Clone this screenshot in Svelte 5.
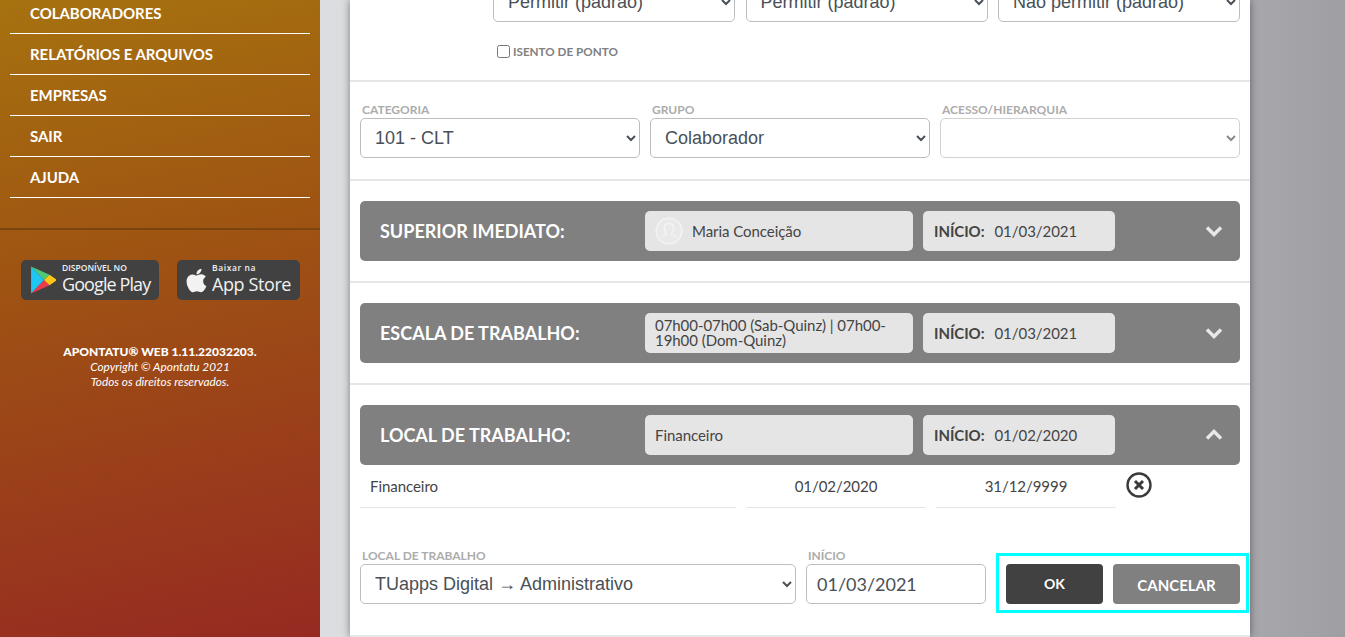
<script>
	const menu = ["COLABORADORES", "RELATÓRIOS E ARQUIVOS", "EMPRESAS", "SAIR", "AJUDA"];
</script>

<div class="page">
	<aside class="sidebar">
		<nav>
			{#each menu as item}
				<a href="#top">{item}</a>
			{/each}
		</nav>
		<div class="stores">
			<div class="badge google">
				<svg class="play" viewBox="0 0 24 27" width="26" height="30">
					<polygon points="1,1 13,13.5 1,26" fill="#1fc5f3" />
					<polygon points="1,1 13,13.5 18,8.7" fill="#4fc87a" />
					<polygon points="1,26 13,13.5 18,18.3" fill="#ee3b4c" />
					<polygon points="18,8.7 13,13.5 18,18.3 25,13.5" fill="#fdc514" />
				</svg>
				<div class="badge-text">
					<small>DISPONÍVEL NO</small>
					<strong>Google Play</strong>
				</div>
			</div>
			<div class="badge apple">
				<svg viewBox="0 0 384 512" width="21" height="27">
					<path fill="#f2f2f2" d="M318.7 268.7c-.2-36.7 16.4-64.4 50-84.8-18.8-26.9-47.2-41.7-84.7-44.6-35.5-2.8-74.3 20.7-88.5 20.7-15 0-49.4-19.7-76.4-19.7C63.3 141.2 4 184.8 4 273.5q0 39.3 14.4 81.2c12.8 36.7 59 126.7 107.2 125.2 25.2-.6 43-17.9 75.8-17.9 31.8 0 48.3 17.9 76.4 17.9 48.6-.7 90.4-82.5 102.6-119.3-65.2-30.7-61.7-90-61.7-91.9zm-56.6-164.2c27.3-32.4 24.8-61.9 24-72.5-24.1 1.4-52 16.4-67.9 34.9-17.5 19.8-27.8 44.3-25.6 71.9 26.1 2 49.9-11.4 69.5-34.3z" />
				</svg>
				<div class="badge-text">
					<small>Baixar na</small>
					<strong>App Store</strong>
				</div>
			</div>
		</div>
		<footer>
			<b>APONTATU® WEB 1.11.22032203.</b>
			<i>Copyright © Apontatu 2021</i>
			<i>Todos os direitos reservados.</i>
		</footer>
	</aside>

	<main class="panel">
		<section class="top">
			<div class="three">
				<select><option>Permitir (padrão)</option></select>
				<select><option>Permitir (padrão)</option></select>
				<select><option>Não permitir (padrão)</option></select>
			</div>
			<label class="check"><input type="checkbox" /> ISENTO DE PONTO</label>
		</section>

		<section class="selects">
			<div class="field">
				<span class="lbl">CATEGORIA</span>
				<select><option>101 - CLT</option></select>
			</div>
			<div class="field">
				<span class="lbl">GRUPO</span>
				<select><option>Colaborador</option></select>
			</div>
			<div class="field wide">
				<span class="lbl">ACESSO/HIERARQUIA</span>
				<select disabled><option></option></select>
			</div>
		</section>

		<section>
			<div class="bar">
				<h3>SUPERIOR IMEDIATO:</h3>
				<div class="pill name">
					<svg class="avatar" viewBox="0 0 28 28" width="28" height="28">
						<circle cx="14" cy="14" r="12.8" fill="#e9e9e9" stroke="#f3f3f3" stroke-width="1.6" />
						<path d="M14 6.5c-3 0-4.6 2.2-4.6 5 0 2 .8 3.6 1.9 4.7v1.2c-2 .9-4.4 1.6-5 3.4M14 6.5c3 0 4.6 2.2 4.6 5 0 2-.8 3.6-1.9 4.7v1.2c2 .9 4.4 1.6 5 3.4" fill="none" stroke="#f4f4f4" stroke-width="1.5" />
					</svg>
					Maria Conceição
				</div>
				<div class="pill date"><b>INÍCIO:</b> 01/03/2021</div>
				<svg class="chev" viewBox="0 0 18 12" width="18" height="12">
					<path d="M2 2.5l7 7 7-7" fill="none" stroke="#e8e8e8" stroke-width="3.4" />
				</svg>
			</div>
		</section>

		<section>
			<div class="bar">
				<h3>ESCALA DE TRABALHO:</h3>
				<div class="pill two-lines">07h00-07h00 (Sab-Quinz) | 07h00-19h00 (Dom-Quinz)</div>
				<div class="pill date"><b>INÍCIO:</b> 01/03/2021</div>
				<svg class="chev" viewBox="0 0 18 12" width="18" height="12">
					<path d="M2 2.5l7 7 7-7" fill="none" stroke="#e8e8e8" stroke-width="3.4" />
				</svg>
			</div>
		</section>

		<section class="open">
			<div class="bar">
				<h3>LOCAL DE TRABALHO:</h3>
				<div class="pill">Financeiro</div>
				<div class="pill date"><b>INÍCIO:</b> 01/02/2020</div>
				<svg class="chev" viewBox="0 0 18 12" width="18" height="12">
					<path d="M2 9.5l7-7 7 7" fill="none" stroke="#e8e8e8" stroke-width="3.4" />
				</svg>
			</div>
			<div class="detail">
				<span class="cell name-cell">Financeiro</span>
				<span class="cell">01/02/2020</span>
				<span class="cell">31/12/9999</span>
				<svg class="remove" viewBox="0 0 26 26" width="26" height="26">
					<circle cx="13" cy="13" r="11.5" fill="none" stroke="#3a3a3a" stroke-width="2.4" />
					<path d="M9 9l8 8M17 9l-8 8" stroke="#3a3a3a" stroke-width="3" />
				</svg>
			</div>
			<div class="form-row">
				<div class="field place">
					<span class="lbl">LOCAL DE TRABALHO</span>
					<select><option>TUapps Digital → Administrativo</option></select>
				</div>
				<div class="field start">
					<span class="lbl">INÍCIO</span>
					<input type="text" value="01/03/2021" />
				</div>
				<div class="actions">
					<button class="ok">OK</button>
					<button class="cancel">CANCELAR</button>
				</div>
			</div>
		</section>
	</main>
	<div class="backdrop"></div>
</div>

<style>
	:global(body) {
		margin: 0;
		overflow: hidden;
	}

	.page {
		display: flex;
		height: 637px;
		overflow: hidden;
		font-family: Lato, sans-serif;
		background: #dcdde0;
	}

	.sidebar {
		flex: 0 0 320px;
		height: 637px;
		background: linear-gradient(168deg, #a6720f 0%, #9f5512 38%, #962a22 100%);
		color: #fff;
	}

	nav {
		display: flex;
		flex-direction: column;
		margin-top: -7px;
		padding: 0 10px 30px;
		border-bottom: 2px solid #7a440f;
	}

	nav a {
		display: flex;
		align-items: center;
		height: 40px;
		padding-left: 20px;
		border-bottom: 1px solid #fff;
		color: #fff;
		font-size: 15px;
		font-weight: 700;
		text-decoration: none;
		letter-spacing: -0.05px;
	}

	.stores {
		display: flex;
		gap: 18px;
		padding: 30px 0 0 21px;
	}

	.badge {
		display: flex;
		align-items: center;
		box-sizing: border-box;
		height: 40px;
		border-radius: 5px;
		background: #414141;
		color: #f2f2f2;
	}

	.google {
		width: 138px;
		padding-left: 9px;
		gap: 6px;
	}

	.apple {
		width: 123px;
		padding-left: 9px;
		gap: 5px;
	}

	.badge-text {
		display: flex;
		flex-direction: column;
		gap: 1px;
		margin-top: -4px;
		font-family: "Open Sans", sans-serif;
	}

	.badge-text small {
		font-size: 8.5px;
		line-height: 10px;
		font-weight: 600;
	}

	.badge-text strong {
		font-size: 18px;
		line-height: 20px;
		font-weight: 500;
		letter-spacing: -0.9px;
		white-space: nowrap;
	}

	.apple .badge-text small {
		font-size: 8.5px;
		letter-spacing: 0.6px;
	}

	.apple .badge-text strong {
		letter-spacing: -0.4px;
	}

	footer {
		display: flex;
		flex-direction: column;
		align-items: center;
		margin-top: 44px;
		font-size: 11.8px;
		line-height: 15px;
	}

	footer b {
		font-size: 12px;
		font-weight: 900;
	}

	.panel {
		flex: 0 0 900px;
		margin-left: 30px;
		height: 637px;
		background: #fff;
		box-shadow: 0 0 8px rgba(0, 0, 0, 0.45);
		position: relative;
		z-index: 1;
	}

	.backdrop {
		flex: 1;
		background: linear-gradient(90deg, #a8a7ac, #9f9ea2);
	}

	section {
		box-sizing: border-box;
		padding: 20px 10px;
		border-bottom: 2px solid #e6e6e6;
	}

	select,
	input[type="text"] {
		box-sizing: border-box;
		width: 100%;
		height: 40px;
		padding: 6px 10px;
		border: 1px solid #bdbdbd;
		border-radius: 5px;
		background: #fff;
		color: #495057;
		font-family: "Liberation Sans", Arial, sans-serif;
		font-size: 18px;
	}

	input[type="text"] {
		font-family: Lato, sans-serif;
	}

	select:disabled {
		border-color: #d2d2d2;
		color: #8a8a8a;
		opacity: 1;
	}

	.top {
		margin-top: -18px;
		height: 100px;
		padding: 0 10px 0 143px;
	}

	.three {
		display: grid;
		grid-template-columns: repeat(3, 242px);
		column-gap: 10.5px;
	}

	.check {
		display: flex;
		align-items: center;
		gap: 3px;
		margin-top: 22px;
		padding-left: 4px;
		color: #808080;
		font-size: 11.7px;
		font-weight: 700;
	}

	.check input {
		width: 13px;
		height: 13px;
		margin: 0;
	}

	.selects {
		display: flex;
		gap: 10px;
		padding: 21px 10px 21px;
	}

	.field {
		display: flex;
		flex-direction: column;
		flex: 0 0 280px;
	}

	.field.wide {
		flex: 0 0 300px;
	}

	.lbl {
		height: 15px;
		padding-left: 2px;
		color: #acacac;
		font-size: 12px;
		line-height: 13px;
		font-weight: 700;
	}

	.bar {
		display: flex;
		align-items: center;
		box-sizing: border-box;
		height: 60px;
		padding-left: 20px;
		border-radius: 5px;
		background: #808080;
	}

	.bar h3 {
		flex: 0 0 265px;
		margin: 0;
		color: #fff;
		font-size: 18px;
		font-weight: 700;
	}

	.pill {
		display: flex;
		align-items: center;
		box-sizing: border-box;
		flex: 0 0 268px;
		height: 40px;
		margin-right: 10px;
		padding-left: 10px;
		border-radius: 5px;
		background: #e5e5e5;
		color: #444;
		font-size: 15px;
		line-height: 15px;
		letter-spacing: -0.05px;
	}

	.pill.two-lines {
		padding-right: 10px;
	}

	.pill.name {
		gap: 9px;
	}

	.pill.date {
		flex: 0 0 192px;
		gap: 10px;
		margin-right: 0;
		padding-left: 11px;
	}

	.pill.date b {
		font-weight: 700;
	}

	.chev {
		margin-left: 90px;
	}

	.open {
		height: 252px;
		padding-bottom: 0;
	}

	.detail {
		display: grid;
		grid-template-columns: 376px 180px 180px 26px;
		column-gap: 10px;
		height: 42px;
	}

	.cell {
		display: flex;
		align-items: center;
		justify-content: center;
		height: 42px;
		border-bottom: 1px solid #e6e6e6;
		color: #444;
		font-size: 15px;
		letter-spacing: -0.05px;
	}

	.name-cell {
		justify-content: flex-start;
		padding-left: 10px;
	}

	.remove {
		align-self: center;
		margin: 0 0 4px 0;
	}

	.form-row {
		display: flex;
		gap: 10px;
		margin-top: 42px;
	}

	.field.place {
		flex: 0 0 436px;
	}

	.field.start {
		flex: 0 0 180px;
	}

	.actions {
		display: flex;
		gap: 10px;
		box-sizing: border-box;
		width: 253px;
		height: 60px;
		margin: 4px -9px 0 0;
		padding: 8px 6px 6px 7px;
		border: 3px solid #00ffff;
	}

	.actions button {
		height: 40px;
		border: 0;
		border-radius: 4px;
		color: #fff;
		font-family: Lato, sans-serif;
		font-weight: 700;
	}

	.ok {
		width: 97px;
		padding-bottom: 2px;
		background: #414141;
		font-size: 14px;
	}

	.cancel {
		width: 127px;
		padding-top: 3px;
		background: #808080;
		font-size: 15px;
	}
</style>
